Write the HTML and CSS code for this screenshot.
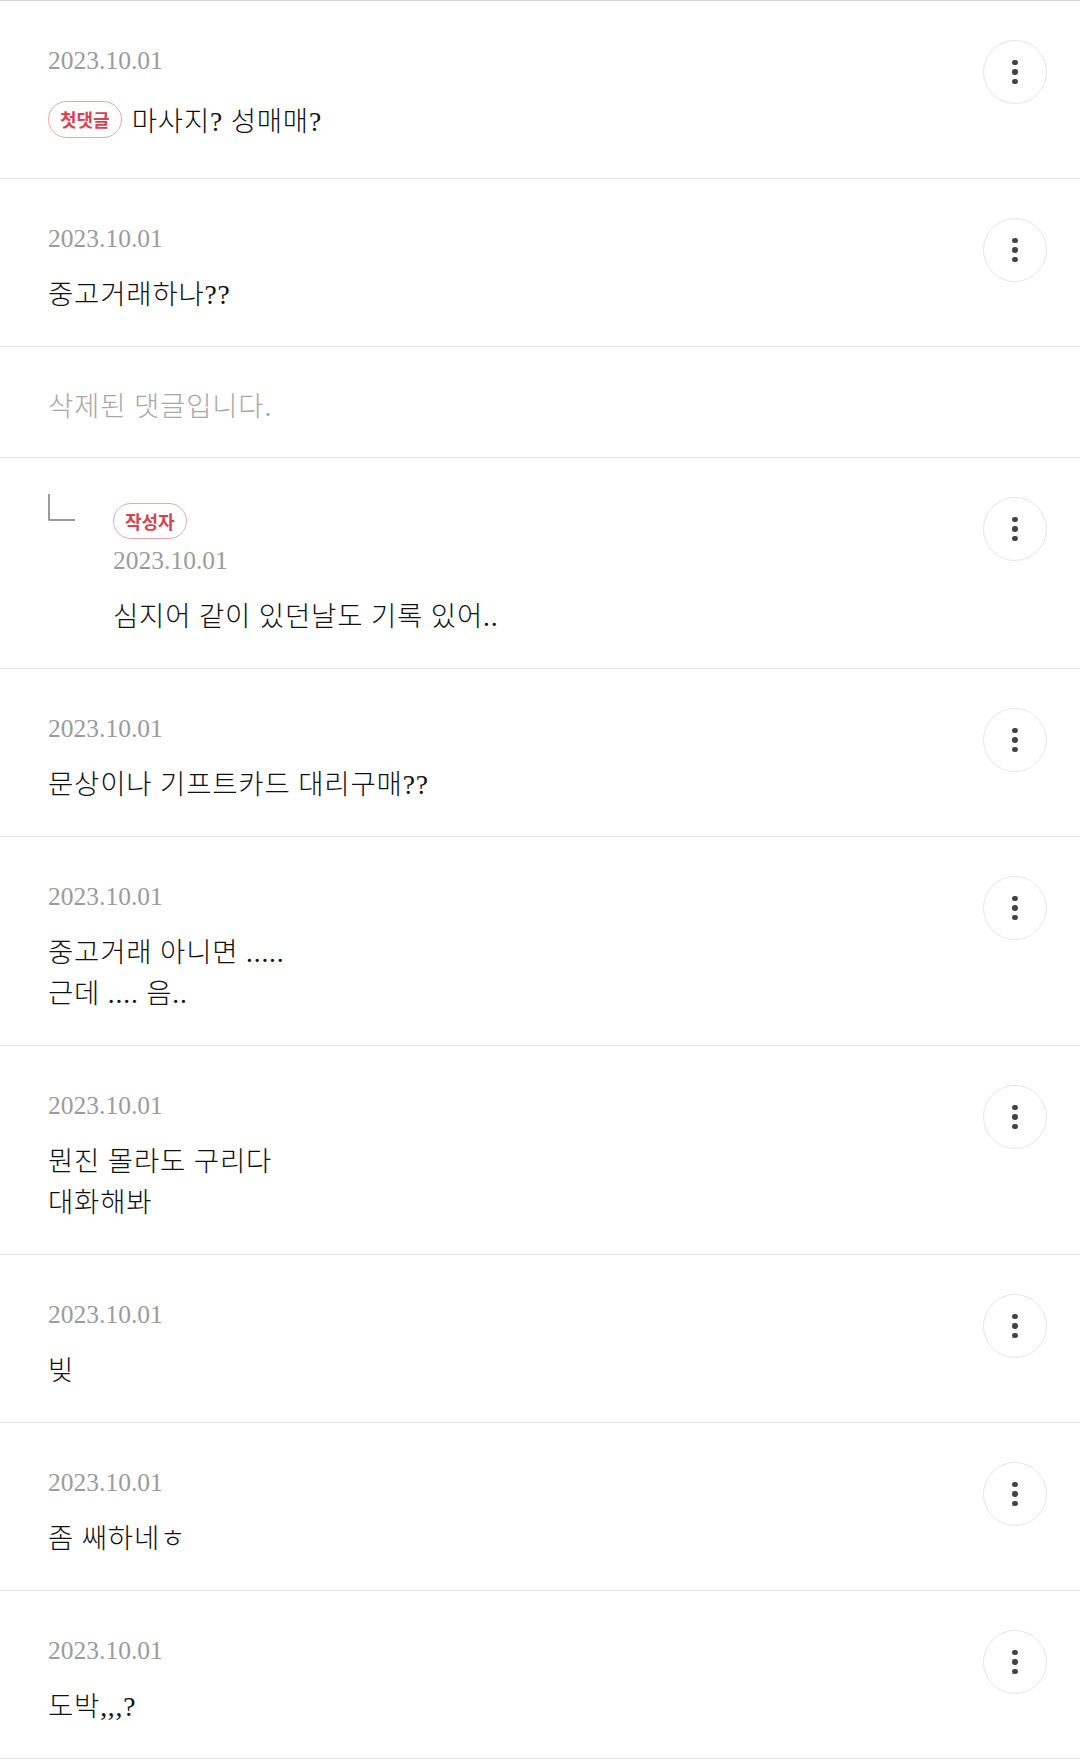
FILE: index.html
```html
<!DOCTYPE html>
<html lang="ko">
<head>
<meta charset="utf-8">
<title>댓글</title>
<link rel="stylesheet" href="styles.css">
</head>
<body>
<ul class="comments">
  <li class="comment">
    <div class="body">
      <div class="date">2023.10.01</div>
      <div class="text-row">
        <span class="badge">첫댓글</span>
        <span class="text">마사지? 성매매?</span>
      </div>
    </div>
    <button class="more" aria-label="더보기"><i></i><i></i><i></i></button>
  </li>
  <li class="comment">
    <div class="body">
      <div class="date">2023.10.01</div>
      <p class="text">중고거래하나??</p>
    </div>
    <button class="more" aria-label="더보기"><i></i><i></i><i></i></button>
  </li>
  <li class="comment deleted">
    <p class="deleted-text">삭제된 댓글입니다.</p>
  </li>
  <li class="comment reply">
    <span class="reply-mark"></span>
    <div class="body">
      <span class="badge badge-block">작성자</span>
      <div class="date">2023.10.01</div>
      <p class="text">심지어 같이 있던날도 기록 있어..</p>
    </div>
    <button class="more" aria-label="더보기"><i></i><i></i><i></i></button>
  </li>
  <li class="comment">
    <div class="body">
      <div class="date">2023.10.01</div>
      <p class="text">문상이나 기프트카드 대리구매??</p>
    </div>
    <button class="more" aria-label="더보기"><i></i><i></i><i></i></button>
  </li>
  <li class="comment">
    <div class="body">
      <div class="date">2023.10.01</div>
      <p class="text">중고거래 아니면 .....<br>근데 .... 음..</p>
    </div>
    <button class="more" aria-label="더보기"><i></i><i></i><i></i></button>
  </li>
  <li class="comment">
    <div class="body">
      <div class="date">2023.10.01</div>
      <p class="text">뭔진 몰라도 구리다<br>대화해봐</p>
    </div>
    <button class="more" aria-label="더보기"><i></i><i></i><i></i></button>
  </li>
  <li class="comment">
    <div class="body">
      <div class="date">2023.10.01</div>
      <p class="text">빚</p>
    </div>
    <button class="more" aria-label="더보기"><i></i><i></i><i></i></button>
  </li>
  <li class="comment">
    <div class="body">
      <div class="date">2023.10.01</div>
      <p class="text">좀 쌔하네ㅎ</p>
    </div>
    <button class="more" aria-label="더보기"><i></i><i></i><i></i></button>
  </li>
  <li class="comment">
    <div class="body">
      <div class="date">2023.10.01</div>
      <p class="text">도박,,,?</p>
    </div>
    <button class="more" aria-label="더보기"><i></i><i></i><i></i></button>
  </li>
</ul>
</body>
</html>
```
FILE: styles.css
```css
html, body {
  margin: 0;
  padding: 0;
  background: #ffffff;
}

body {
  font-family: "Liberation Serif", "Noto Sans CJK KR", serif;
  color: #111111;
}

.comments {
  list-style: none;
  margin: 0;
  padding: 0;
  border-top: 1px solid #d2d2d2;
}

.comment {
  display: flex;
  align-items: flex-start;
  padding: 0 33px 0 48px;
  border-bottom: 1px solid #e4e4e4;
}

.body {
  flex: 1;
  min-width: 0;
  padding: 43px 0 31px;
}

.date {
  font-size: 25.5px;
  line-height: 34px;
  color: #9b9b9b;
}

.text {
  margin: 18px 0 0;
  font-size: 27.5px;
  line-height: 41px;
  letter-spacing: 0.8px;
  font-weight: 300;
  color: #111111;
}

.text-row {
  display: flex;
  align-items: center;
  gap: 10px;
  min-height: 51px;
  margin-top: 18px;
}

.text-row .text {
  margin: 0;
}

.badge {
  display: inline-flex;
  align-items: center;
  justify-content: center;
  box-sizing: border-box;
  height: 37px;
  padding: 0 11px;
  margin-bottom: 5px;
  border: 1.5px solid #e8a8ab;
  border-radius: 19px;
  font-family: "Noto Sans CJK KR", sans-serif;
  font-size: 18px;
  font-weight: 700;
  color: #d44450;
  background: #ffffff;
}

.badge-block {
  height: 36px;
  margin: 2px 0 5px;
}

/* deleted comment: single grey line, no action button */
.deleted {
  padding-top: 39px;
  padding-bottom: 30px;
}

.deleted-text {
  margin: 0;
  font-size: 27.5px;
  line-height: 41px;
  letter-spacing: 0.8px;
  font-weight: 300;
  color: #a8a8a8;
}

/* reply indent mark */
.reply-mark {
  flex: none;
  width: 27px;
  height: 27px;
  margin: 36px 38px 0 0;
  box-sizing: border-box;
  border-left: 2.5px solid #9a9a9a;
  border-bottom: 2.5px solid #9a9a9a;
  border-bottom-left-radius: 2px;
}

.more {
  flex: none;
  display: flex;
  flex-direction: column;
  align-items: center;
  justify-content: center;
  gap: 4px;
  width: 64px;
  height: 64px;
  margin-top: 39px;
  padding: 0;
  border: 1.5px solid #e6e6e6;
  border-radius: 50%;
  background: #ffffff;
}

.more i {
  display: block;
  width: 5.5px;
  height: 5.5px;
  border-radius: 50%;
  background: #444444;
}
```
